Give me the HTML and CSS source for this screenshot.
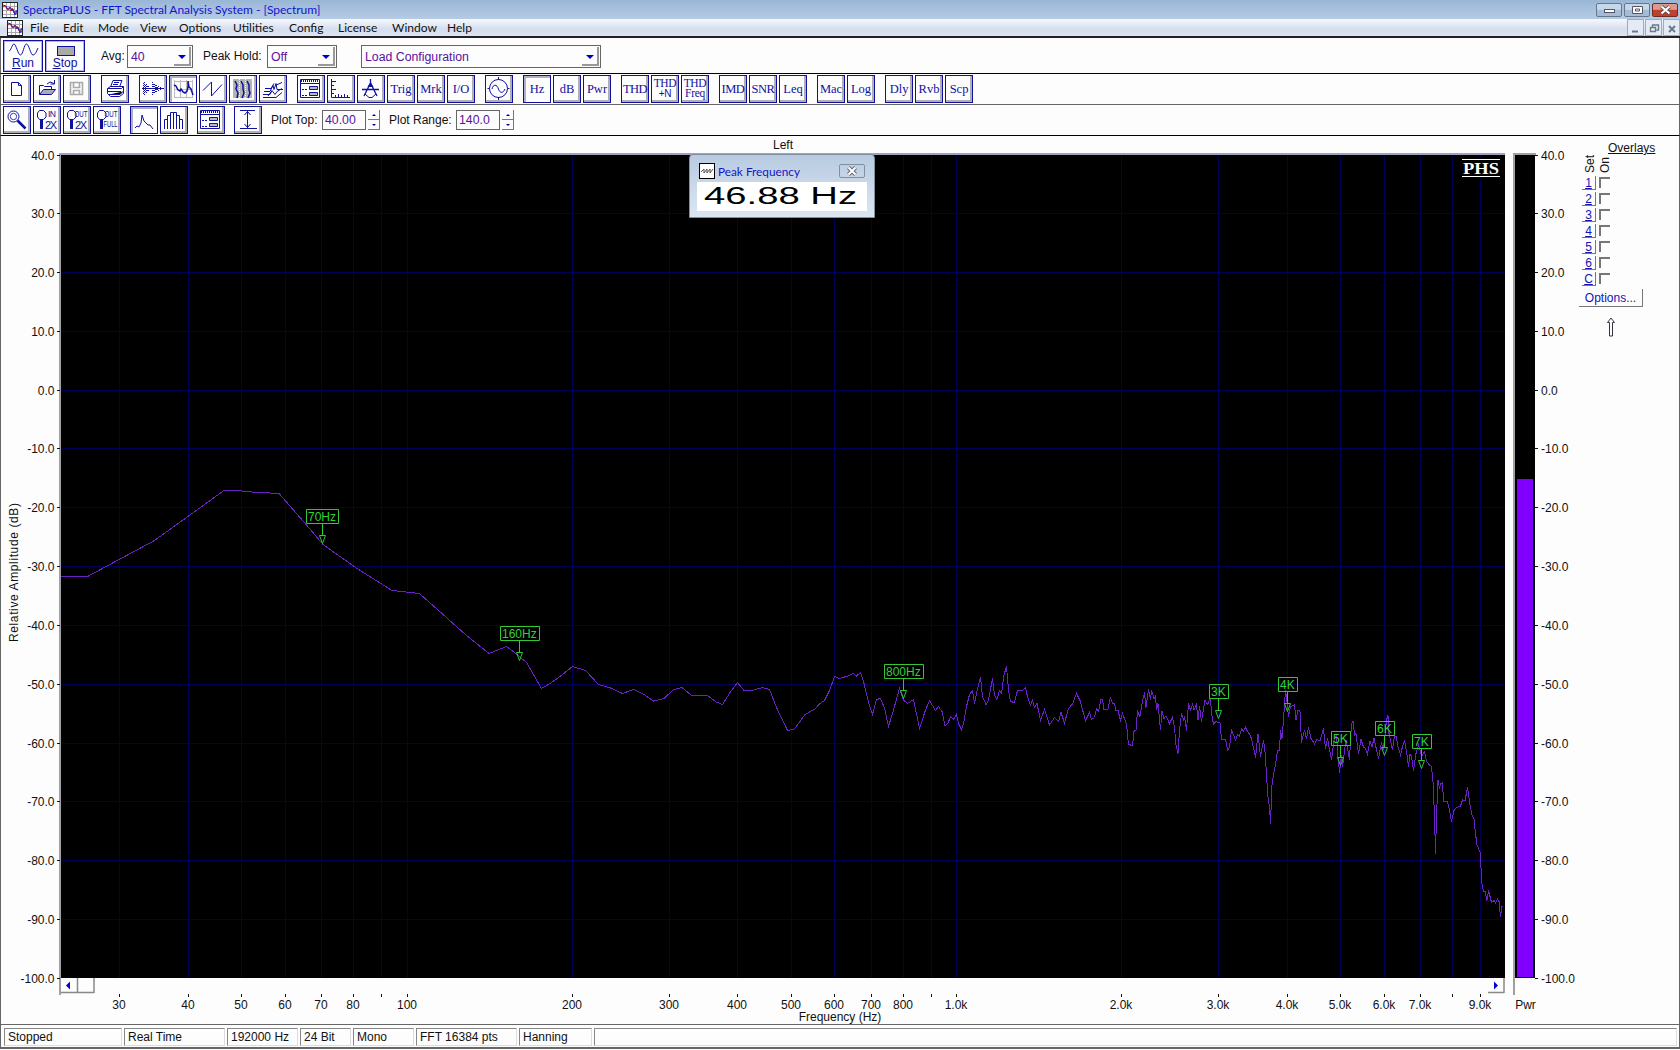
FILE: index.html
```html
<!DOCTYPE html>
<html lang="en">

<head>
    <meta charset="UTF-8">
    <title>SpectraPLUS - FFT Spectral Analysis System - [Spectrum]</title>
    <link rel="stylesheet" href="styles.css">
</head>

<body>

    <!-- Shared icons -->
    <svg class="defs">
        <defs>
            <symbol id="app" viewBox="0 0 16 16">
                <rect x=".5" y=".5" width="15" height="15" fill="#fff" stroke="#222" />
                <path d="M4.5 1v14M8.5 1v14M12.5 1v14M1 4.5h14M1 8.5h14M1 12.5h14" stroke="#aaa" />
                <path d="M1 5l2-1 2 3 2-1 2 3 1-3 2 5 1-2 2 3" fill="none" stroke="#d22" />
                <path d="M1 3l3 1 2 4 2-3 2 4 1-2 2 6 2-5" fill="none" stroke="#22c" />
            </symbol>
            <symbol id="dialog" viewBox="0 0 26 26">
                <path d="M2.500 3.500h19v18h-19z" fill="#fff" stroke="#1010a0" />
                <path d="M3 5h18" stroke="#1010a0" stroke-dasharray="1 1" stroke-width="2" />
                <path d="M3 7.500h18" stroke="#1010a0" />
                <path d="M4 13.500h5M4 19.500h5" stroke="#1010a0" stroke-dasharray="2 1" />
                <path d="M11.500 10.500h8v3h-8zM11.500 16.500h8v3h-8z" fill="#bbb" stroke="#1010a0" />
            </symbol>
            <symbol id="lens" viewBox="0 0 26 26">
                <path d="M5.500 3.500h4l2.500 2.500v4l-2.500 2.500h-4L3.500 10V6z" fill="#fff" stroke="#1010a0" />
                <path d="M7.500 12v10" stroke="#1010a0" stroke-width="3" />
            </symbol>
        </defs>
    </svg>

    <div class="titlebar">
        <svg class="app-icon"><use href="#app" /></svg>
        <span class="title">SpectraPLUS - FFT Spectral Analysis System - [Spectrum]</span>
        <div class="win-buttons">
            <span class="win-btn"><svg viewBox="0 0 24 12"><rect x="7.500" y="5.500" width="10" height="3" fill="#fff" stroke="#556" /></svg></span>
            <span class="win-btn"><svg viewBox="0 0 24 12"><path d="M7.500 2.500h10v7h-10zM10.500 5h4v2h-4z" fill="#fff" stroke="#556" /></svg></span>
            <span class="win-btn close"><svg viewBox="0 0 24 12"><path d="M8.500 2.500l8 7M16.500 2.500l-8 7" stroke="#644" stroke-width="4" /><path d="M8.500 2.500l8 7M16.500 2.500l-8 7" stroke="#fff" stroke-width="2.200" /></svg></span>
        </div>
    </div>

    <div class="menubar">
        <svg class="app-icon"><use href="#app" /></svg>
        <span>File</span><span>Edit</span><span>Mode</span><span>View</span><span>Options</span><span>Utilities</span><span>Config</span><span>License</span><span>Window</span><span>Help</span>
        <div class="mdi-buttons">
            <i><svg viewBox="0 0 15 16"><path d="M4 11.500h6" stroke="#6a7a8c" stroke-width="2" /></svg></i>
            <i><svg viewBox="0 0 15 16"><path d="M6.500 7V5h6v5h-2M4.500 7.500h5v4h-5z" fill="none" stroke="#6a7a8c" stroke-width="1.400" /></svg></i>
            <i><svg viewBox="0 0 15 16"><path d="M5 6l6 6M11 6l-6 6" stroke="#6a7a8c" stroke-width="2" /></svg></i>
        </div>
    </div>

    <!-- Run / stop and averaging -->
    <div class="toolbar run-bar">
        <div class="big-btn">
            <svg viewBox="0 0 38 16"><path d="M5 10C7 10 8 3 10 3s4 11 6.500 11S20 3 22.500 3s4 11 6.500 11 4-5 5-7" fill="none" stroke="#1010a0" /></svg>
            <span><u>R</u>un</span>
        </div>
        <div class="big-btn">
            <svg viewBox="0 0 38 16"><rect x="11.500" y="5.500" width="17" height="9" fill="#aaa" stroke="#1010a0" /></svg>
            <span><u>S</u>top</span>
        </div>
        <label class="avg-label">Avg:</label>
        <div class="combo avg">40<b></b></div>
        <label class="peak-label">Peak Hold:</label>
        <div class="combo peak">Off<b></b></div>
        <div class="combo config">Load Configuration<b></b></div>
    </div>

    <div class="toolbar main-bar">
        <div class="group">
            <div class="btn"><svg viewBox="0 0 26 26"><path d="M7.500 6.500h7l3 3v10h-10zM14.500 6.500v3h3" fill="#fff" stroke="#1010a0" /></svg></div>
            <div class="btn"><svg viewBox="0 0 26 26"><path d="M5.500 18.500v-9h4l1 1h7v3" fill="none" stroke="#1010a0" /><path d="M5.500 18.500l4-5h12l-4 5z" fill="#aab" stroke="#1010a0" /><path d="M13 8l3-2 4 1.500M20.500 4v4h-4" fill="none" stroke="#1010a0" /></svg></div>
            <div class="btn"><svg viewBox="0 0 26 26"><path d="M6.500 6.500h12v12h-12zM9.500 6.500h6v5h-6zM9.500 14.500h6v4h-6z" fill="none" stroke="#aaa" stroke-width="1.600" /></svg></div>
        </div>
        <div class="group">
            <div class="btn"><svg viewBox="0 0 26 26"><path d="M8.500 11l2.500-6.500h9L17.500 11M5.500 12.500l3-2h13l-2 2zM5.500 12.500v5l3 3h9l4-3v-7" fill="#fff" stroke="#1010a0" /><path d="M6 15.500h13M7 18.500h11l3-3M12 6.500h5M11 8.500h5" stroke="#1010a0" /></svg></div>
        </div>
        <div class="group">
            <div class="btn"><svg viewBox="0 0 26 26"><path d="M2 12.500h22" stroke="#1010a0" /><path d="M4.500 6v13M6.500 8v9M8.500 10v5M12.500 6v13M14.500 8v9M16.500 9v7M18.500 10v5M20.500 11v3" stroke="#1010a0" stroke-dasharray="1 1" /><path d="M3.500 6v13M5.500 8v9M7.500 9v7M9.500 11v3M13.500 7v11M15.500 8v9M17.500 10v5M19.500 11v3" stroke="#1010a0" stroke-dasharray="1 1" stroke-dashoffset="1" /></svg></div>
            <div class="btn down"><svg viewBox="0 0 26 26"><path d="M4.500 4v18M10.500 4v18M16.500 4v18M22.500 4v18M4 5.500h19M4 13.500h19M4 21.500h19" stroke="#bbb" /><path d="M4 9l2 1 2 4 2 1 1-2 2 3 2 1 2-2 1-4V5l1 6 2 2 2 6" fill="none" stroke="#1010a0" stroke-width="1.500" /></svg></div>
            <div class="btn"><svg viewBox="0 0 26 26"><path d="M3 14.500L11.500 6v14L22 8.500" fill="none" stroke="#1010a0" /></svg></div>
            <div class="btn"><svg viewBox="0 0 26 26"><path d="M3 3h19v19H3z" fill="#b4b4b4" /><path d="M5 5l2 4-1 4 2 4-1 5M11 5l2 4v4l1 4-2 5M17 5l2 4v5l1 3-2 5" fill="none" stroke="#1010a0" stroke-width="1.500" /><path d="M9.500 3v19M15.500 3v19" stroke="#fff" stroke-dasharray="1 1" /></svg></div>
            <div class="btn"><svg viewBox="0 0 26 26"><path d="M3 21.500h13l6-5M3 18.500h7l2-4 3 4 2-3 5-3M4 15.500h6l3-6 1 4 2-6 1 6h6M5 12.500h6l3-5M15 9.500l7-3M8 20l3-4" fill="none" stroke="#1010a0" /></svg></div>
        </div>
        <div class="group">
            <div class="btn"><svg viewBox="0 0 26 26"><use href="#dialog" /></svg></div>
            <div class="btn"><svg viewBox="0 0 26 26"><path d="M3.500 3v18.500H22M4 5.500h4M4 9.500h2M4 13.500h4M4 17.500h2M7.500 21v-2M10.500 21v-3M13.500 21v-2M16.500 21v-3M19.500 21v-2" fill="none" stroke="#1010a0" /></svg></div>
            <div class="btn"><svg viewBox="0 0 26 26"><path d="M12.500 3v5M12.500 7L6 20M12.500 7L19 20M4 13.500h17" fill="none" stroke="#1010a0" stroke-width="1.300" /><path d="M12.500 6l-3 5h6z" fill="#1010a0" /><path d="M7 18l4 3.500h3l4-3.500" fill="none" stroke="#1010a0" /></svg></div>
            <div class="btn">Trig</div>
            <div class="btn">Mrk</div>
            <div class="btn">I/O</div>
        </div>
        <div class="group">
            <div class="btn"><svg viewBox="0 0 26 26"><circle cx="12.500" cy="12.500" r="9" fill="none" stroke="#1010a0" /><path d="M12.500 1v3M12.500 21v3M1.500 12.500h2M21.500 12.500h2M6 13c1-5 5-5 6.500 0s5 4 6.500 0" fill="none" stroke="#1010a0" /></svg></div>
        </div>
        <div class="group">
            <div class="btn down">Hz</div>
            <div class="btn">dB</div>
            <div class="btn">Pwr</div>
        </div>
        <div class="group">
            <div class="btn tight">THD</div>
            <div class="btn two">THD<br><em>+N</em></div>
            <div class="btn two">THD<br>Freq</div>
        </div>
        <div class="group">
            <div class="btn tight">IMD</div>
            <div class="btn tight">SNR</div>
            <div class="btn">Leq</div>
        </div>
        <div class="group">
            <div class="btn">Mac</div>
            <div class="btn">Log</div>
        </div>
        <div class="group">
            <div class="btn">Dly</div>
            <div class="btn">Rvb</div>
            <div class="btn">Scp</div>
        </div>
    </div>

    <div class="toolbar plot-bar">
        <div class="group">
            <div class="btn"><svg viewBox="0 0 26 26"><circle cx="9.500" cy="9.500" r="5.500" fill="#fff" stroke="#1010a0" /><circle cx="9.500" cy="9.500" r="3.200" fill="none" stroke="#1010a0" stroke-width=".8" /><path d="M13.500 13.500l8 8" stroke="#1010a0" stroke-width="2.500" /></svg></div>
            <div class="btn"><svg viewBox="0 0 26 26"><use href="#lens" /><text class="tiny" x="14" y="10" textLength="8">IN</text><text class="tiny big" x="11" y="22" textLength="12">2X</text></svg></div>
            <div class="btn"><svg viewBox="0 0 26 26"><use href="#lens" /><text class="tiny" x="10.500" y="10" textLength="13" lengthAdjust="spacingAndGlyphs">OUT</text><text class="tiny big" x="11" y="22" textLength="12">2X</text></svg></div>
            <div class="btn"><svg viewBox="0 0 26 26"><use href="#lens" /><text class="tiny" x="10.500" y="10" textLength="13" lengthAdjust="spacingAndGlyphs">OUT</text><text class="tiny" x="9.500" y="20" textLength="14" lengthAdjust="spacingAndGlyphs">FULL</text></svg></div>
        </div>
        <div class="group">
            <div class="btn down"><svg viewBox="0 0 26 26"><path d="M4 21l2-2 2 1 2-4 1-8 2 6 4 4 2 0 3 4" fill="none" stroke="#1010a0" /></svg></div>
            <div class="btn"><svg viewBox="0 0 26 26"><path d="M3.500 22V12.500h3V22V8.500h3V22V5.500h3V22V5.500h3V22V8.500h3V22V12.500h3V22" fill="none" stroke="#1010a0" /></svg></div>
        </div>
        <div class="group">
            <div class="btn"><svg viewBox="0 0 26 26"><use href="#dialog" /></svg></div>
        </div>
        <div class="group">
            <div class="btn"><svg viewBox="0 0 26 26"><path d="M5 3.500h15M5 21.500h17M12.500 4v17M9.500 8l3-3.500 3 3.500M9.500 17l3 3.500 3-3.500" fill="none" stroke="#1010a0" /></svg></div>
        </div>
        <label class="top-label">Plot Top:</label>
        <div class="field">40.00</div>
        <div class="spin"><i></i><i></i></div>
        <label class="range-label">Plot Range:</label>
        <div class="field">140.0</div>
        <div class="spin"><i></i><i></i></div>
    </div>

    <div class="workspace">

        <!-- Graph, user units are window pixels -->
        <svg class="graph" viewBox="1 136 1577 888">
            <rect x="59" y="153" width="2" height="842" fill="#a0a0a4" />
            <rect x="59" y="153" width="1446" height="2" fill="#a0a0c0" />
            <rect x="61" y="155" width="1444" height="823" fill="#000" />
            <g id="grid"></g>
            <polyline class="trace" points="61,576.5 87.5,576.5 154.5,540.5 224,490.5 242,491 252,492 279,493.5 307,525.5 323,544.5 357,568.5 392,590.5 419.5,593.5 466,635 489,653.5 506.500,646.5 514,652 526.5,662.5 541.5,688.5 550,683.5 560,676.500 572.500,666.5 585.5,670.5 591.5,677 598.5,684.5 610.5,688 622.5,693.5 633.5,689.5 642.5,693.5 653.5,701 664,698.5 673.5,689.5 682,687.5 691.5,695.5 707.5,695.5 716,702 722.5,704.5 730,692.5 737.5,682.5 744,690.5 752,690.5 762.5,687.5 769.5,689.5 776.5,707.5 787.5,730.5 794.5,729 805,714.5 815,709 819.5,704 824.5,700.5 829.5,690.5 834.5,676.5 839.5,678.5 848,676 853,673.5 856.5,676 860.5,672.5 864,683.5 868.5,702.5 872.5,714.5 876.5,699.5 880.5,698.5 884.5,708 888.5,726.5 893.5,710 899.5,688.5 903.5,700 907.5,703.5 913.5,699.5 919.5,728.5 925,711.5 929.5,700.5 935.5,710.5 938.5,706.5 942,711.5 945,725.5 947.5,724.5 950.5,716.5 953.5,719.5 956.5,714.5 958.5,723.5 961.5,729.5 964,721.5 966.5,706.5 969.5,694.5 972.5,690.5 974.5,703.5 977.5,688.5 980.5,677.5 982.5,696.5 986,704.5 988.5,700 992.5,678.5 994.5,695 997,699.5 999.5,690.5 1001.5,693.5 1004,675 1006.5,666.5 1008.5,690 1010.5,701.5 1014.5,702.5 1017.5,690.5 1022.5,690.5 1025.5,688 1027.5,696.5 1030.5,705 1032.5,700 1034.5,707.5 1037,703.5 1040.5,720.5 1044.5,709.5 1049.5,725 1054.5,717.5 1058.5,721.5 1061,712.5 1064.5,723 1068.5,708.5 1072.5,704 1076.5,693.5 1080,700.5 1085.5,720.5 1089.5,712.5 1091.5,719.5 1094.5,717.5 1096.5,709 1098.5,711 1101,699.5 1102.500,700 1104,710 1108,709.5 1110.5,697 1112.5,703.5 1114.500,703.5 1116,710.5 1118,710.5 1120.5,720.5 1122.5,713.5 1126.5,724 1128.5,744.5 1132.5,745.5 1134,731.5 1136,730 1137.5,711.5 1140,716.5 1142.5,701.5 1144.5,692.5 1146,707.5 1148.5,689.5 1150.5,700 1151.5,690.5 1154,698.5 1155.500,696 1156.5,710 1158,703.5 1160.5,730 1162,711 1164,718.5 1166,716 1169.5,723.5 1172.5,717.5 1174.5,727.5 1176,745 1178,753.5 1179.5,730 1181.5,713.5 1183.5,719.5 1184.500,717 1186.5,730.5 1188.5,703.5 1190.5,710 1192.5,704.5 1194,710 1196.5,704.5 1198,720 1199.5,706.5 1201.5,721.5 1205,700.5 1207.5,704.5 1210.5,698 1211.5,713.5 1213.5,724 1216,721.5 1220,723 1221.5,739.5 1225.5,739.5 1227.5,750 1229.5,747.5 1231.5,729.5 1233.5,735 1235.5,740 1237.5,735 1239.500,736 1241.5,729 1243.500,731 1245.5,727.5 1247.5,731.5 1249.5,734 1251.5,738.5 1255.5,757.5 1258,734 1260.5,756.5 1263.5,740 1265.5,756.5 1266.5,776.5 1268,796.5 1269.5,807 1270.5,823.5 1272,785 1273.5,775 1276,761.5 1277.5,750.5 1279.500,750 1280.5,730.5 1282,738.5 1283.5,720 1285.5,690 1287.5,706.5 1288.5,716.5 1290.5,706.5 1294.5,705 1296,720 1298,710 1300,711.5 1301.5,742.5 1304.5,730 1306.5,738.5 1308.5,727.5 1311,738.5 1314.5,744 1317,739.5 1320,741 1323.5,728.5 1325.5,748.5 1327.5,738.5 1331.5,760 1334,740 1336.500,735 1338,756.5 1339.5,772.5 1341.5,755 1342.5,766.5 1346,740 1349.5,759.5 1351.5,723.5 1353,721 1354.5,735 1356,733.500 1358.5,753.5 1361,739.5 1363.500,747 1365.500,748.500 1367.5,754 1370,741.5 1372,746.500 1374,738.5 1378.5,758.5 1381.5,742.5 1383,750 1384.5,740 1386.5,720 1388,715.5 1389,733.5 1390.5,740 1392.5,750 1394.5,736 1396.500,736.500 1397.5,745 1400.5,755 1402.5,746.5 1404.5,740.5 1406.5,751.5 1408.5,766.5 1410,754.5 1411.500,756 1413.5,770.5 1416,753.5 1418.5,745 1420,750 1421.5,756.5 1424.5,751.5 1426.5,761.5 1429,764.5 1431.5,766.5 1433,781.5 1434.5,816.5 1435.5,853.5 1436.5,816.5 1438,780 1439.5,788.5 1440.500,784 1442.5,782.5 1443.5,801.5 1447.5,801.5 1449.5,810.5 1451.5,821.5 1454,810.5 1456.5,807.5 1460.5,806 1462.5,800 1465,801 1467.5,787.5 1470,805 1472,815 1474,818.500 1475.5,833.5 1477,845 1478.500,848.500 1480.5,853.5 1481.5,881.5 1483.5,891.5 1485,891.500 1487,900.5 1488.5,890.5 1491.5,902.5 1494,900.500 1495.500,903 1497.5,899 1499,901.5 1500.5,916.5 1502,906.5 1503,906.500" />
            <g id="markers"></g>

            <!-- PHS logo -->
            <rect x="1459" y="157" width="44" height="23" fill="#000" />
            <path d="M1462 159.500h38M1462 176.500h38" stroke="#fff" />
            <text class="phs" x="1463" y="174" textLength="36" lengthAdjust="spacingAndGlyphs">PHS</text>

            <!-- Power bar -->
            <rect x="1513" y="153" width="2" height="842" fill="#a0a0a4" />
            <rect x="1513" y="153" width="23" height="2" fill="#a0a0a4" />
            <rect x="1515" y="155" width="20" height="823" fill="#000" />
            <rect x="1517" y="479" width="16" height="498" fill="#8000ff" />

            <text x="783" y="149" text-anchor="middle">Left</text>
            <text x="840" y="1021" text-anchor="middle">Frequency (Hz)</text>
            <text x="1525.5" y="1009" text-anchor="middle">Pwr</text>
            <text class="ylabel" transform="translate(17.5 642) rotate(-90)" textLength="139">Relative Amplitude (dB)</text>

            <!-- Scrollbar -->
            <path d="M61 992.500h33M77.500 978v15M94 978v15" fill="none" stroke="#888" stroke-width="1.500" />
            <path d="M66 985.500l4-4v8z" fill="#00c" />
            <path d="M1488 992.500h16M1504 978v15" fill="none" stroke="#888" stroke-width="1.500" />
            <path d="M1498 985.500l-4-4v8z" fill="#00c" />
        </svg>

        <div class="overlays">
            <u class="heading">Overlays</u>
            <div class="cols"><span>Set</span><span>On</span></div>
            <div class="row"><span class="set">1</span><span class="check"></span></div>
            <div class="row"><span class="set">2</span><span class="check"></span></div>
            <div class="row"><span class="set">3</span><span class="check"></span></div>
            <div class="row"><span class="set">4</span><span class="check"></span></div>
            <div class="row"><span class="set">5</span><span class="check"></span></div>
            <div class="row"><span class="set">6</span><span class="check"></span></div>
            <div class="row"><span class="set">C</span><span class="check"></span></div>
            <div class="options">Options...</div>
            <svg class="arrow" viewBox="0 0 10 20"><path d="M3.500 19V5.500H1.500L5 1l3.500 4.500H6.500V19z" fill="#fff" stroke="#334" /></svg>
        </div>

        <div class="peak-window">
            <div class="peak-title">
                <svg viewBox="0 0 16 16"><rect x=".5" y=".5" width="15" height="15" fill="#fff" stroke="#000" /><path d="M2 9l3-3v4l3-4v4l3-4v4l3-4" fill="none" stroke="#555" /></svg>
                <span>Peak Frequency</span>
                <i><svg viewBox="0 0 24 12"><path d="M8.500 2.500l7 7M15.500 2.500l-7 7" stroke="#667" stroke-width="4" /><path d="M8.500 2.500l7 7M15.500 2.500l-7 7" stroke="#fff" stroke-width="2" /></svg></i>
            </div>
            <svg class="readout" viewBox="0 0 170 29"><text x="7" y="22" textLength="153" lengthAdjust="spacingAndGlyphs">46.88 Hz</text></svg>
        </div>
    </div>

    <div class="statusbar">
        <span>Stopped</span><span>Real Time</span><span>192000 Hz</span><span>24 Bit</span><span>Mono</span><span>FFT 16384 pts</span><span>Hanning</span><span></span>
    </div>

    <script>
        const NS = 'http://www.w3.org/2000/svg';

        function add(parent, tag, attrs, text) {
            const el = document.createElementNS(NS, tag);
            for (const k in attrs) el.setAttribute(k, attrs[k]);
            if (text) el.textContent = text;
            parent.appendChild(el);
        }

        const grid = document.getElementById('grid');
        const markers = document.getElementById('markers');
        const xOf = f => Math.round(406.6 + 549.4 * Math.log10(f / 100)) + 0.5;
        const yOf = db => Math.floor(154.9 + (40 - db) * 5.881) + 0.5;

        // Amplitude lines and labels
        for (let db = 40; db >= -100; db -= 10) {
            const y = db === 40 ? 155.5 : yOf(db);
            if (db < 40 && db > -100) add(grid, 'path', { d: `M61 ${y}H1505`, class: 'grid' });
            add(grid, 'path', { d: `M57 ${y}h3M1535 ${y}h3`, class: 'tick' });
            add(grid, 'text', { x: 54.5, y: y + 4.5, 'text-anchor': 'end' }, db.toFixed(1));
            add(grid, 'text', { x: 1541, y: y + 4.5 }, db.toFixed(1));
        }

        // Frequency lines and labels
        const freqs = [30, 40, 50, 60, 70, 80, 90, 100, 200, 300, 400, 500, 600, 700, 800, 900,
            1000, 2000, 3000, 4000, 5000, 6000, 7000, 8000, 9000];
        for (const f of freqs) {
            const x = xOf(f);
            add(grid, 'path', { d: `M${x} 155V978`, class: 'grid' });
            add(grid, 'path', { d: `M${x} 994v3`, class: 'tick' });
            if (f === 90 || f === 900 || f === 8000) continue;
            add(grid, 'text', { x: x - 0.5, y: 1009, 'text-anchor': 'middle' }, f < 1000 ? f : (f / 1000).toFixed(1) + 'k');
        }

        // label, x, box top, box left, box width
        const marks = [
            ['70Hz', 322.5, 509.5, 306.5, 32],
            ['160Hz', 519.5, 626.5, 500.5, 39],
            ['800Hz', 903.5, 664.5, 884.5, 39],
            ['3K', 1218.5, 684.5, 1209.5, 19],
            ['4K', 1287.5, 677.5, 1278.5, 19],
            ['5K', 1340.5, 731.5, 1331.5, 19],
            ['6K', 1384.5, 721.5, 1375.5, 19],
            ['7K', 1421.5, 734.5, 1412.5, 19]
        ];
        for (const [label, x, top, left, w] of marks) {
            add(markers, 'path', { d: `M${left} ${top}h${w}v14h-${w}zM${x} ${top + 14}v12M${x - 3} ${top + 26}h6l-3 8z`, class: 'mark' });
            add(markers, 'text', { x: left + 1.5, y: top + 11.5 }, label);
        }
    </script>

</body>

</html>
```
FILE: styles.css
```css
* {
    box-sizing: border-box;
}

body {
    margin: 0;
    width: 1680px;
    height: 1050px;
    overflow: hidden;
    display: flex;
    flex-direction: column;
    background-color: #fdfdfd;
    font-family: "Liberation Sans", Arial, sans-serif;
    font-size: 12px;
    color: #111;
}

svg {
    display: block;
}

.defs {
    position: absolute;
    width: 0;
    height: 0;
}

.titlebar {
    display: flex;
    align-items: center;
    height: 19px;
    padding: 0 2px;
    background: linear-gradient(#9ab6d5, #b5cbe5);
    font-family: Lato, sans-serif;
}

.app-icon {
    width: 16px;
    height: 16px;
}

.title {
    flex: 1;
    margin-left: 5px;
    font-size: 12px;
    letter-spacing: -0.03px;
    color: #1414d0;
}

.win-buttons {
    display: flex;
    gap: 2px;
}

.win-btn {
    width: 26px;
    height: 14px;
    border: 1px solid #66788e;
    border-radius: 2px;
    background: linear-gradient(#c6d7ea 45%, #a5bcd6 50%);
}

.win-btn.close {
    border-color: #702a24;
    background: linear-gradient(#dc9a8c 45%, #c0402c 50%);
}

.menubar {
    display: grid;
    grid-template-columns: 23px 33px 35px 42px 39px 54px 56px 49px 54px 55px 1fr auto;
    align-items: center;
    height: 19px;
    padding-left: 7px;
    border-bottom: 2px solid #222;
    background: linear-gradient(#f6f8fc, #d5deee 60%, #dde5f3);
    font-family: Lato, sans-serif;
    font-size: 12px;
}

.mdi-buttons {
    display: flex;
    gap: 1px;
}

.mdi-buttons i {
    width: 17px;
    height: 17px;
    border: 1px solid #a0acba;
    background-color: #e4ebf5;
}

.toolbar {
    display: flex;
    align-items: center;
    padding-left: 2px;
    border-left: 1px solid #666;
    border-right: 1px solid #666;
    height: 31px;
    border-bottom: 1px solid #000;
}

.run-bar {
    height: 36px;
    padding-top: 1px;
}

.main-bar {
    gap: 10px;
    border-bottom-color: #666;
}

.plot-bar {
    gap: 9px;
}

.big-btn {
    width: 40px;
    height: 32px;
    margin-right: 2px;
    border: 1px solid #1010a0;
    box-shadow: inset 1px 1px #b4b4ec, inset -1px -1px #b4b4ec;
    color: #1010a0;
    text-align: center;
}

.big-btn svg {
    width: 38px;
    height: 16px;
}

.big-btn span {
    display: block;
    line-height: 13px;
}

.avg-label {
    width: 26px;
    margin-left: 14px;
}

.peak-label {
    width: 64px;
    margin-left: 10px;
}

.combo {
    position: relative;
    height: 23px;
    padding-left: 3px;
    border: 1px solid #666;
    font-size: 12.3px;
    line-height: 22px;
    color: #5a10a0;
}

.combo b {
    position: absolute;
    right: 1px;
    top: 1px;
    width: 17px;
    height: 19px;
    border-right: 2px solid #999;
    border-bottom: 2px solid #999;
}

.combo b::after {
    content: "";
    position: absolute;
    left: 4px;
    top: 8px;
    border: 4px solid transparent;
    border-top-color: #00c;
    border-bottom: 0;
}

.combo.avg {
    width: 66px;
}

.combo.peak {
    width: 70px;
}

.combo.config {
    width: 240px;
    margin-left: 24px;
}

.group {
    display: flex;
    gap: 2px;
}

.btn {
    width: 28px;
    height: 28px;
    border: 1px solid #1010a0;
    box-shadow: inset -2px -2px #b0b0b4;
    font-family: "Liberation Serif", "Times New Roman", serif;
    font-size: 12.5px;
    line-height: 27px;
    text-align: center;
    white-space: nowrap;
    color: #1010a0;
}

.btn.down {
    box-shadow: inset 2px 2px #b0b0c8;
}

.btn.tight {
    letter-spacing: -0.5px;
}

.btn.two {
    font-size: 11.5px;
    letter-spacing: -0.3px;
    line-height: 10px;
    padding-top: 2px;
}

.btn em {
    font-family: "Liberation Sans", sans-serif;
    font-style: normal;
    font-size: 10px;
}

.tiny {
    font-family: "Liberation Sans", sans-serif;
    font-size: 8.5px;
    fill: #1010a0;
}

.tiny.big {
    font-size: 11px;
}

.top-label {
    width: 51px;
}

.range-label {
    width: 67px;
}

.top-label,
.range-label,
.avg-label,
.peak-label {
    white-space: nowrap;
}

.plot-bar .field {
    width: 44px;
    height: 20px;
    margin-left: -9px;
    padding-left: 2px;
    border: 1px solid #666;
    font-size: 12.3px;
    line-height: 18px;
    color: #5a10a0;
}

.spin {
    display: flex;
    flex-direction: column;
    width: 12px;
    margin-left: -7px;
}

.spin i {
    height: 10px;
    border-right: 1px solid #777;
    border-bottom: 1px solid #777;
}

.spin i::after {
    content: "";
    display: block;
    width: 0;
    margin: 4px 0 0 4px;
    border: 2px solid transparent;
    border-top: 0;
    border-bottom-color: #00a;
}

.spin i + i::after {
    border-top: 2px solid #00a;
    border-bottom: 0;
}

.workspace {
    position: relative;
    display: flex;
    height: 888px;
    border-left: 1px solid #666;
    border-right: 1px solid #666;
}

.graph {
    width: 1577px;
    height: 888px;
}

.graph text {
    font-size: 12px;
    fill: #111;
}

.graph .phs {
    font-family: "Liberation Serif", serif;
    font-size: 17px;
    font-weight: bold;
    fill: #fff;
}

.grid {
    stroke: #00005a;
}

.tick {
    stroke: #111;
}

.trace {
    fill: none;
    stroke: #6a22c4;
    shape-rendering: crispEdges;
}

.mark {
    fill: none;
    stroke: #32c832;
}

#markers text {
    fill: #32d232;
}

.overlays {
    display: flex;
    flex-direction: column;
    align-items: flex-start;
    padding: 5px 0 0 1px;
}

.heading {
    margin-left: 29px;
    line-height: 14px;
}

.cols {
    display: flex;
    gap: 1px;
    height: 21px;
    margin: -3px 0 3px 4px;
    align-items: flex-end;
}

.cols span {
    writing-mode: vertical-rl;
    transform: rotate(180deg);
    line-height: 14px;
    height: 19px;
}

.row {
    display: flex;
    gap: 3px;
    height: 16px;
    margin-left: 3px;
}

.set {
    width: 14px;
    height: 14px;
    border-right: 1px solid #777;
    border-bottom: 1px solid #777;
    line-height: 14px;
    text-align: center;
    text-decoration: underline;
    color: #1414b4;
}

.check {
    width: 11px;
    height: 11px;
    margin-top: 1px;
    border-left: 2px solid #777;
    border-top: 2px solid #777;
}

.options {
    width: 64px;
    height: 18px;
    margin-top: 1px;
    border-right: 1px solid #777;
    border-bottom: 1px solid #777;
    line-height: 18px;
    text-align: center;
    color: #1414b4;
}

.arrow {
    width: 10px;
    height: 20px;
    margin: 10px 0 0 27px;
}

.peak-window {
    position: absolute;
    left: 688px;
    top: 18px;
    width: 186px;
    height: 64px;
    padding: 8px 7px;
    border: 1px solid #8090a0;
    border-radius: 4px 4px 0 0;
    background: linear-gradient(#b8cbe0, #dce6f2);
}

.peak-title {
    display: flex;
    align-items: center;
    height: 16px;
    padding: 0 2px;
    font-family: Lato, sans-serif;
    font-size: 11.8px;
    color: #1414c8;
}

.peak-title > svg {
    width: 16px;
    height: 16px;
    margin-right: 3px;
}

.peak-title span {
    flex: 1;
}

.peak-title i {
    width: 26px;
    height: 14px;
    border: 1px solid #8090a4;
    border-radius: 2px;
}

.readout {
    width: 170px;
    height: 29px;
    margin-top: 3px;
    background-color: #fff;
}

.readout text {
    font-size: 23px;
}

.statusbar {
    display: grid;
    grid-template-columns: 118px 101px 71px 51px 61px 101px 73px 1fr;
    gap: 2px;
    height: 25px;
    padding: 3px 2px 2px 3px;
    border: 1px solid #666;
    border-bottom-width: 2px;
}

.statusbar span {
    height: 18px;
    padding-left: 3px;
    border: 1px solid #888;
    border-right-color: #ddd;
    border-bottom-color: #ddd;
    line-height: 17px;
    white-space: nowrap;
}
```
